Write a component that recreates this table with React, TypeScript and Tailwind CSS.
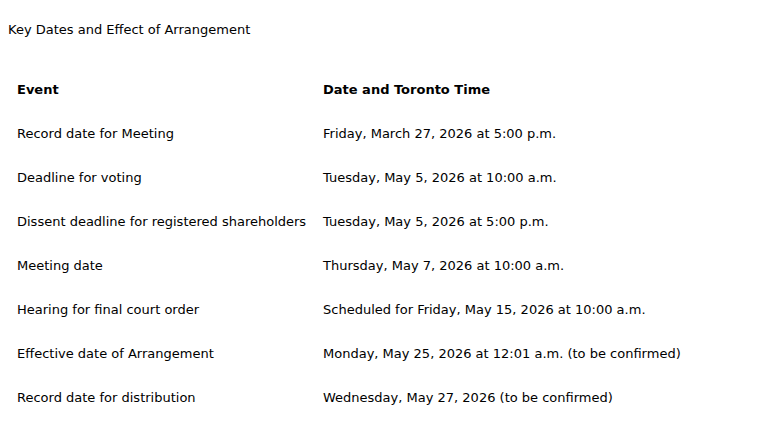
import React from 'react';

const rows: [string, string][] = [
  ['Record date for Meeting', 'Friday, March 27, 2026 at 5:00 p.m.'],
  ['Deadline for voting', 'Tuesday, May 5, 2026 at 10:00 a.m.'],
  ['Dissent deadline for registered shareholders', 'Tuesday, May 5, 2026 at 5:00 p.m.'],
  ['Meeting date', 'Thursday, May 7, 2026 at 10:00 a.m.'],
  ['Hearing for final court order', 'Scheduled for Friday, May 15, 2026 at 10:00 a.m.'],
  ['Effective date of Arrangement', 'Monday, May 25, 2026 at 12:01 a.m. (to be confirmed)'],
  ['Record date for distribution', 'Wednesday, May 27, 2026 (to be confirmed)'],
];

const App: React.FC = () => {
  return (
    <div className="w-[775px] h-[423px] bg-white text-black px-2 pt-[22px] font-['DejaVu_Sans',Verdana,sans-serif] text-[13px] leading-4 overflow-hidden">
      <p>Key Dates and Effect of Arrangement</p>

      <div className="mt-[30px] grid grid-cols-[306px_1fr]">
        <div className="h-[44px] flex items-center pl-[9px] font-bold">Event</div>
        <div className="h-[44px] flex items-center pl-[9px] font-bold">Date and Toronto Time</div>
        {rows.map(([event, date]) => (
          <React.Fragment key={event}>
            <div className="h-[44px] flex items-center pl-[9px] whitespace-nowrap">{event}</div>
            <div className="h-[44px] flex items-center pl-[9px] whitespace-nowrap">{date}</div>
          </React.Fragment>
        ))}
      </div>
    </div>
  );
};

export default App;
